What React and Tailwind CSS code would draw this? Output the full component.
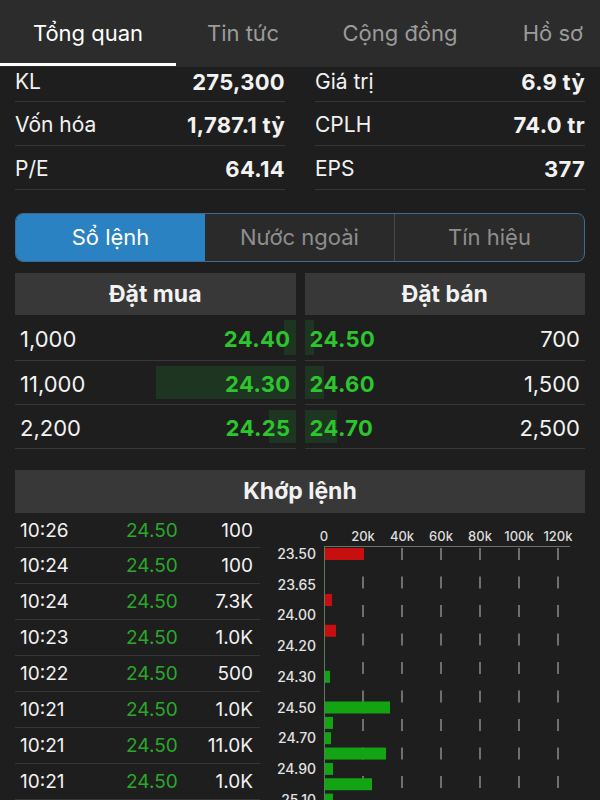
import React from 'react';

const tabs = [
  { label: 'Tổng quan', w: 'w-[176px]', active: true },
  { label: 'Tin tức', w: 'w-[134px]' },
  { label: 'Cộng đồng', w: 'w-[180px]' },
  { label: 'Hồ sơ', w: 'w-[126px]' },
];

const stats = [
  [['KL', '275,300'], ['Giá trị', '6.9 tỷ']],
  [['Vốn hóa', '1,787.1 tỷ'], ['CPLH', '74.0 tr']],
  [['P/E', '64.14'], ['EPS', '377']],
];

const buys = [
  { qty: '1,000', price: '24.40', bar: 12 },
  { qty: '11,000', price: '24.30', bar: 140 },
  { qty: '2,200', price: '24.25', bar: 27 },
];

const sells = [
  { qty: '700', price: '24.50', bar: 9 },
  { qty: '1,500', price: '24.60', bar: 19 },
  { qty: '2,500', price: '24.70', bar: 32 },
];

const trades = [
  ['10:26', '24.50', '100'],
  ['10:24', '24.50', '100'],
  ['10:24', '24.50', '7.3K'],
  ['10:23', '24.50', '1.0K'],
  ['10:22', '24.50', '500'],
  ['10:21', '24.50', '1.0K'],
  ['10:21', '24.50', '11.0K'],
  ['10:21', '24.50', '1.0K'],
];

// volume by price level, x scale: 39px per 20k
const levels = [
  { w: 39, c: '#c80f0f' }, null, null,
  { w: 7, c: '#c80f0f' }, null,
  { w: 11, c: '#c80f0f' }, null, null,
  { w: 5, c: '#12a412' }, null,
  { w: 65, c: '#12a412' },
  { w: 8, c: '#12a412' },
  { w: 6, c: '#12a412' },
  { w: 61, c: '#12a412' },
  { w: 8, c: '#12a412' },
  { w: 47, c: '#12a412' },
  { w: 8, c: '#12a412' },
];

const yLabels = ['23.50', '23.65', '24.00', '24.20', '24.30', '24.50', '24.70', '24.90', '25.10'];
const xLabels = ['0', '20k', '40k', '60k', '80k', '100k', '120k'];

function VolumeChart() {
  const step = 15.35;
  return (
    <svg width="330" height="290" viewBox="0 0 330 290" className="block shrink-0">
      {xLabels.map((t, i) => (
        <text key={t} x={54 + i * 39} y="26" fill="#dcdcdc" fontSize="13" fontWeight="500" textAnchor="middle">{t}</text>
      ))}
      <line x1="54" y1="31.5" x2="300" y2="31.5" stroke="#6e6e6e" strokeWidth="1" />
      {[1, 2, 3, 4, 5, 6].map(i => (
        <line key={i} x1={54 + i * 39} y1="33" x2={54 + i * 39} y2="290" stroke="#8a8a8a" strokeWidth="1.5" strokeDasharray="12 16.5" />
      ))}
      {levels.map((l, i) => l && (
        <rect key={i} x="55" y={33 + i * step} width={l.w} height="12" fill={l.c} />
      ))}
      <line x1="54.5" y1="31" x2="54.5" y2="290" stroke="#5e7a5e" strokeWidth="1" />
      {yLabels.map((t, i) => (
        <text key={t} x="46" y={44 + i * 30.7} fill="#e2e2e2" fontSize="14" fontWeight="500" textAnchor="end">{t}</text>
      ))}
    </svg>
  );
}

export default function App() {
  return (
    <div className="w-[600px] h-[800px] overflow-hidden bg-[#1e1e1e] text-[#f2f2f2] font-['Inter','Roboto',sans-serif]">
      {/* Tabs */}
      <div className="flex h-[67px] bg-[#2c2c2c] overflow-hidden">
        {tabs.map(t => (
          <div key={t.label} className={`relative ${t.w} shrink-0 flex items-center justify-center`}>
            <span className={`text-[22px] ${t.active ? 'text-white' : 'text-[#9b9b9b]'}`}>{t.label}</span>
            {t.active && <div className="absolute left-0 right-0 bottom-[1px] h-[3px] bg-white" />}
          </div>
        ))}
      </div>

      {/* Stats */}
      <div className="px-[15px] flex flex-col">
        {stats.map((row, i) => (
          <div key={i} className="grid grid-cols-2 gap-[30px]">
            {row.map(([k, v]) => (
              <div key={k} className={`flex justify-between border-b border-[#363636] ${i === 0 ? 'h-[35px] items-end pb-[6px]' : 'h-[44px] items-center pt-[2px]'}`}>
                <span className="text-[21px] leading-[26px]">{k}</span>
                <span className="text-[22px] leading-[26px] font-bold tracking-[0.3px]">{v}</span>
              </div>
            ))}
          </div>
        ))}
      </div>

      {/* Segment */}
      <div className="mx-[15px] mt-[23px] h-[49px] flex rounded-[8px] border border-[#3b6b90] overflow-hidden bg-[#2a2a2a]">
        <div className="flex-1 flex items-center justify-center bg-[#2b82c3] text-white text-[22px]">Sổ lệnh</div>
        <div className="flex-1 flex items-center justify-center text-[#8e8e8e] text-[22px] border-r border-[#4a4a4a]">Nước ngoài</div>
        <div className="flex-1 flex items-center justify-center text-[#8e8e8e] text-[22px]">Tín hiệu</div>
      </div>

      {/* Order book */}
      <div className="mx-[15px] mt-[11px] grid grid-cols-2 gap-[9px]">
        <div>
          <div className="h-[42px] bg-[#383838] flex items-center justify-center text-[23px] font-bold">Đặt mua</div>
          {buys.map((b, i) => (
            <div key={i} className={`relative flex items-center justify-between px-[5px] pt-[3px] border-b border-[#383838] ${i === 0 ? 'h-[46px]' : 'h-[44px]'}`}>
              <div className="absolute right-0 top-[5px] bottom-[5px] bg-[#1d3521]" style={{ width: b.bar }} />
              <span className="relative text-[22px]">{b.qty}</span>
              <span className="relative text-[22px] font-bold tracking-[0.4px] text-[#2cc52c]">{b.price}</span>
            </div>
          ))}
        </div>
        <div>
          <div className="h-[42px] bg-[#383838] flex items-center justify-center text-[23px] font-bold">Đặt bán</div>
          {sells.map((s, i) => (
            <div key={i} className={`relative flex items-center justify-between px-[5px] pt-[3px] border-b border-[#383838] ${i === 0 ? 'h-[46px]' : 'h-[44px]'}`}>
              <div className="absolute left-0 top-[5px] bottom-[5px] bg-[#1d3521]" style={{ width: s.bar }} />
              <span className="relative text-[22px] font-bold tracking-[0.4px] text-[#2cc52c]">{s.price}</span>
              <span className="relative text-[22px]">{s.qty}</span>
            </div>
          ))}
        </div>
      </div>

      {/* Matched orders */}
      <div className="mx-[15px] mt-[21px] h-[43px] bg-[#383838] flex items-center justify-center text-[23px] font-bold">Khớp lệnh</div>
      <div className="flex">
        <div className="ml-[15px] w-[245px] shrink-0">
          {trades.map((t, i) => (
            <div key={i} className={`grid grid-cols-[100px_75px_1fr] items-center pl-[5px] pr-[7px] pt-[2px] border-b border-[#363636] ${i === 0 ? 'h-[35px]' : 'h-[36px]'}`}>
              <span className="text-[19px]">{t[0]}</span>
              <span className="text-[19px] text-[#2aa82a] pl-[6px]">{t[1]}</span>
              <span className="text-[19px] text-right">{t[2]}</span>
            </div>
          ))}
        </div>
        <div className="ml-[10px] mt-[2px]">
          <VolumeChart />
        </div>
      </div>
    </div>
  );
}
